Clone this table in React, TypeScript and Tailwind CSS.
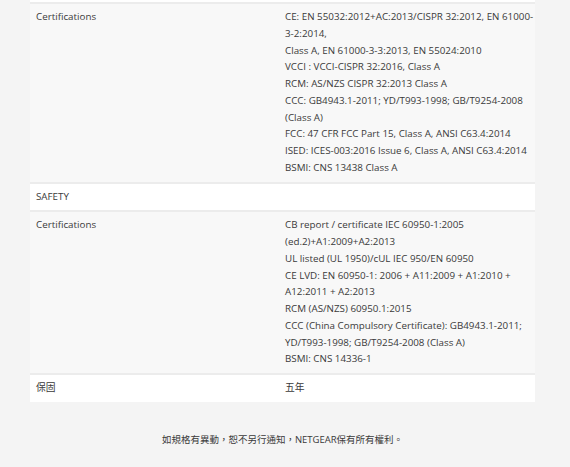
import React from "react";

type Row = { label: string; lines?: string[]; section?: boolean };

const rows: Row[] = [
  {
    label: "Certifications",
    lines: [
      "CE: EN 55032:2012+AC:2013/CISPR 32:2012, EN 61000-",
      "3-2:2014,",
      "Class A, EN 61000-3-3:2013, EN 55024:2010",
      "VCCI : VCCI-CISPR 32:2016, Class A",
      "RCM: AS/NZS CISPR 32:2013 Class A",
      "CCC: GB4943.1-2011; YD/T993-1998; GB/T9254-2008",
      "(Class A)",
      "FCC: 47 CFR FCC Part 15, Class A, ANSI C63.4:2014",
      "ISED: ICES-003:2016 Issue 6, Class A, ANSI C63.4:2014",
      "BSMI: CNS 13438 Class A",
    ],
  },
  { label: "SAFETY", section: true },
  {
    label: "Certifications",
    lines: [
      "CB report / certificate IEC 60950-1:2005",
      "(ed.2)+A1:2009+A2:2013",
      "UL listed (UL 1950)/cUL IEC 950/EN 60950",
      "CE LVD: EN 60950-1: 2006 + A11:2009 + A1:2010 +",
      "A12:2011 + A2:2013",
      "RCM (AS/NZS) 60950.1:2015",
      "CCC (China Compulsory Certificate): GB4943.1-2011;",
      "YD/T993-1998; GB/T9254-2008 (Class A)",
      "BSMI: CNS 14336-1",
    ],
  },
  { label: "保固", lines: ["五年"], section: true },
];

export default function App() {
  return (
    <div
      className="min-h-[467px] w-[570px] bg-[#f4f4f4] text-[#3a3a3a]"
      style={{ fontFamily: '"Open Sans", "Noto Sans CJK TC", sans-serif' }}
    >
      <div className="ml-[30px] w-[505px]">
        <div className="h-[2px] bg-white" />
        {rows.map((row, i) => (
          <div
            key={i}
            className={`flex border-t-2 border-[#ececec] py-[5px] text-[9.8px] leading-[16.75px] ${
              row.section ? "bg-white" : "bg-[#f8f8f8]"
            }`}
          >
            <div className="w-[255px] shrink-0 pl-[6px]">{row.label}</div>
            <div className="whitespace-nowrap">
              {row.lines?.map((l, j) => (
                <div key={j}>{l}</div>
              ))}
            </div>
          </div>
        ))}
        <p className="mt-[30px] text-center text-[9.5px] leading-[16px]">
          如規格有異動，恕不另行通知，NETGEAR保有所有權利。
        </p>
      </div>
    </div>
  );
}
